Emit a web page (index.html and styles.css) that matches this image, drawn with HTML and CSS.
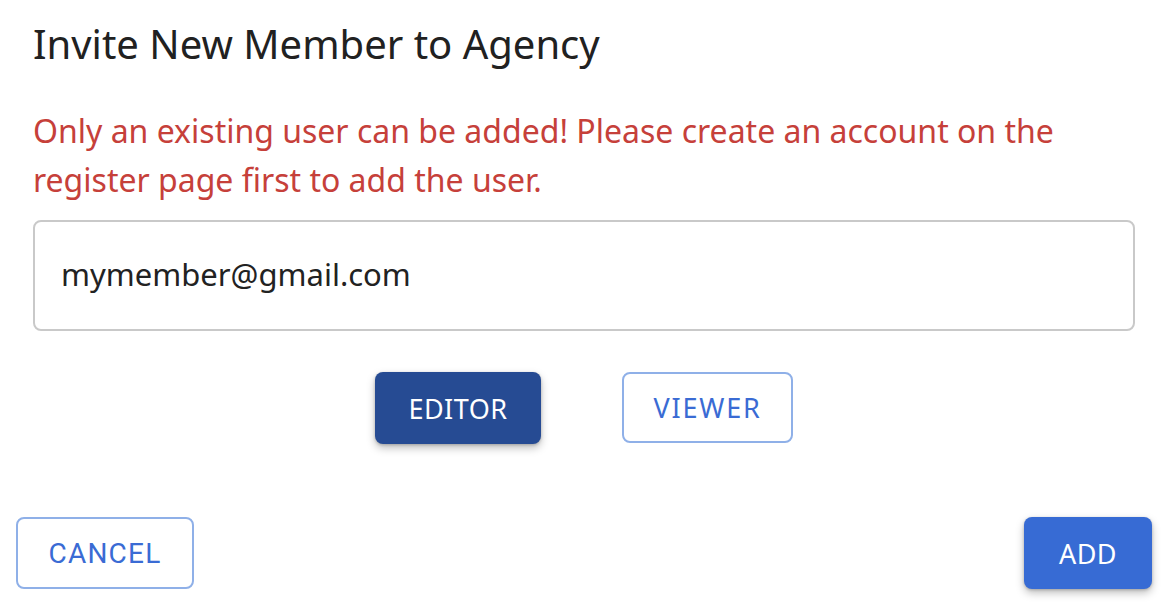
FILE: index.html
```html
<!DOCTYPE html>
<html>
<head>
<meta charset="utf-8">
<link rel="stylesheet" href="styles.css">
</head>
<body>
<div class="dialog">
  <div class="content">
    <h1 class="title">Invite New Member to Agency</h1>
    <p class="error">Only an existing user can be added! Please create an account on the register page first to add the user.</p>
    <div class="field">mymember@gmail.com</div>
    <div class="roles">
      <button class="btn role active">EDITOR</button>
      <button class="btn role outline viewer">VIEWER</button>
    </div>
  </div>
  <div class="actions">
    <button class="btn cancel outline">CANCEL</button>
    <button class="btn add">ADD</button>
  </div>
</div>
</body>
</html>
```

FILE: styles.css
```css
html, body {
  margin: 0;
  padding: 0;
  background: #ffffff;
}
body {
  font-family: "Noto Sans", "Liberation Sans", sans-serif;
  width: 1176px;
  height: 616px;
  overflow: hidden;
}
.dialog {
  display: flex;
  flex-direction: column;
}
.content {
  padding: 0 41px 0 33px;
  display: flex;
  flex-direction: column;
}
.title {
  margin: 18px 0 0 0;
  font-size: 40px;
  line-height: 52px;
  font-weight: 400;
  color: #212121;
}
.error {
  margin: 36px 0 0 0;
  font-size: 32px;
  line-height: 49px;
  color: #c6403a;
}
.field {
  margin-top: 16px;
  border: 2px solid #c9c9c9;
  border-radius: 8px;
  display: flex;
  align-items: center;
  padding-left: 26px;
  font-size: 31px;
  color: #222222;
  padding-bottom: 4px;
  box-sizing: border-box;
  height: 111px;
}
.roles {
  margin-top: 41px;
  display: flex;
  justify-content: center;
  gap: 81px;
}
.btn {
  font-family: "Noto Sans", "Liberation Sans", sans-serif;
  font-size: 27px;
  letter-spacing: 0.5px;
  border-radius: 8px;
  box-sizing: border-box;
  height: 72px;
  cursor: pointer;
  background: #ffffff;
}
.role.active {
  width: 166px;
  background: #264b93;
  color: #ffffff;
  border: none;
  box-shadow: 0 4px 8px rgba(0,0,0,0.25), 0 1px 3px rgba(0,0,0,0.2);
}
.outline {
  border: 2px solid #8fb0e8;
  color: #3a6bd4;
}
.role.outline {
  width: 171px;
  height: 71px;
}
.viewer {
  letter-spacing: 1.8px;
}
.actions {
  margin-top: 73px;
  padding: 0 24px 0 16px;
  display: flex;
  justify-content: space-between;
}
.cancel {
  width: 178px;
  font-family: Roboto, "Liberation Sans", sans-serif;
  font-size: 28px;
  letter-spacing: 1.2px;
}
.add {
  width: 128px;
  background: #376bd4;
  color: #ffffff;
  border: none;
  box-shadow: 0 4px 8px rgba(0,0,0,0.25), 0 1px 3px rgba(0,0,0,0.2);
}
```
